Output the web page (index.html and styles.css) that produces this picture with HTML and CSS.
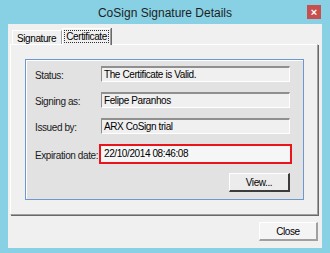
FILE: index.html
```html
<!DOCTYPE html>
<html lang="en">
<head>
    <meta charset="UTF-8">
    <title>CoSign Signature Details</title>
    <link rel="stylesheet" href="styles.css">
</head>
<body>
    <div class="window">
        <!-- title bar -->
        <div class="titlebar">
            <span class="title">CoSign Signature Details</span>
            <span class="close-x">&#215;</span>
        </div>

        <div class="client">
            <!-- tabs -->
            <div class="tabs">
                <div class="tab">Signature</div>
                <div class="tab active"><span class="focus">Certificate</span></div>
            </div>

            <div class="panel">
                <div class="group">
                    <div class="row">
                        <span class="label">Status:</span>
                        <div class="field">The Certificate is Valid.</div>
                    </div>
                    <div class="row">
                        <span class="label">Signing as:</span>
                        <div class="field">Felipe Paranhos</div>
                    </div>
                    <div class="row">
                        <span class="label">Issued by:</span>
                        <div class="field">ARX CoSign trial</div>
                    </div>
                    <div class="row">
                        <span class="label">Expiration date:</span>
                        <div class="field highlight">22/10/2014 08:46:08</div>
                    </div>
                    <div class="actions">
                        <button class="btn view-btn">View...</button>
                    </div>
                </div>
            </div>

            <div class="footer">
                <button class="btn close-btn">Close</button>
            </div>
        </div>
    </div>
</body>
</html>
```

FILE: styles.css
```css
body, html {
    margin: 0;
    padding: 0;
}

.window {
    width: 330px;
    height: 253px;
    background-color: #88d1e4;
    display: flex;
    flex-direction: column;
    font-family: "Liberation Sans", Arial, sans-serif;
    font-size: 10px;
    letter-spacing: -0.4px;
    color: #000;
}

/* title bar */
.titlebar {
    height: 24px;
    display: flex;
    align-items: center;
    justify-content: center;
    position: relative;
}

.title {
    font-size: 12px;
    color: #1e1e1e;
    letter-spacing: 0;
    margin-top: 2px;
}

.close-x {
    position: absolute;
    top: 5px;
    right: 9px;
    width: 14px;
    height: 14px;
    background-color: #c7504f;
    color: #fff;
    font-size: 11px;
    font-weight: bold;
    letter-spacing: 0;
    line-height: 14px;
    text-align: center;
}

/* client area */
.client {
    flex: 1;
    margin: 0 8px 5px 8px;
    background-color: #f0f0f0;
    display: flex;
    flex-direction: column;
    padding-top: 5px;
}

.tabs {
    display: flex;
    align-items: flex-end;
    margin-left: 4px;
    height: 15px;
    position: relative;
    z-index: 1;
}

.tab {
    height: 13px;
    padding: 0 5px 0 4px;
    border-top: 1px solid #fff;
    border-left: 1px solid #fff;
    border-right: 1px solid #a0a0a0;
    line-height: 15px;
    background-color: #f0f0f0;
}

.tab.active {
    height: 16px;
    margin-bottom: -1px;
    padding: 0 1px;
    box-shadow: 1px 0 0 #696969;
    line-height: 15px;
}

.focus {
    border: 1px dotted #333;
    padding: 0 1px;
}

.panel {
    height: 171px;
    margin: 0 4px 0 2px;
    box-sizing: border-box;
    border-top: 1px solid #fff;
    border-left: 1px solid #fff;
    border-right: 1px solid #a0a0a0;
    border-bottom: 1px solid #a0a0a0;
    box-shadow: 1px 1px 0 #696969;
    padding: 14px 13px 14px 14px;
}

.group {
    height: 100%;
    box-sizing: border-box;
    background-color: #e2e2e2;
    border: 1px solid #6c98d0;
    box-shadow: inset 1px 1px 0 #fff;
    padding: 6px 13px 0 9px;
    display: flex;
    flex-direction: column;
    gap: 10px;
}

.row {
    display: flex;
    align-items: center;
    height: 16px;
}

.row:nth-child(4) {
    margin-top: 2px;
}

.label {
    width: 66px;
    flex-shrink: 0;
    white-space: nowrap;
    color: #1a1a1a;
    padding-top: 3px;
}

.field {
    flex: 1;
    height: 16px;
    box-sizing: border-box;
    background-color: #f0f0f0;
    border-top: 2px solid #8f8f8f;
    border-left: 1px solid #8f8f8f;
    border-right: 1px solid #fff;
    border-bottom: 1px solid #fff;
    padding-left: 2px;
    line-height: 13px;
    white-space: nowrap;
    overflow: hidden;
}

.field.highlight {
    outline: 2px solid #e8161a;
    outline-offset: 0;
    border: 1px solid #f4f4f4;
    background-color: #f6f6f6;
    line-height: 14px;
}

.actions {
    display: flex;
    justify-content: flex-end;
    margin-top: 1px;
}

.btn {
    font-family: "Liberation Sans", Arial, sans-serif;
    font-size: 10px;
    letter-spacing: -0.4px;
    color: #000;
    background-color: #ececec;
    border-top: 1px solid #fff;
    border-left: 1px solid #fff;
    border-right: 2px solid #3c3c3c;
    border-bottom: 2px solid #3c3c3c;
    padding: 0;
    margin: 0;
    box-sizing: border-box;
}

.view-btn {
    width: 61px;
    height: 19px;
}

.footer {
    display: flex;
    justify-content: flex-end;
    padding: 7px 4px 0 0;
}

.close-btn {
    width: 59px;
    height: 19px;
    background-color: #f4f4f4;
    border-right: 2px solid #a0a0a0;
    border-bottom: 2px solid #a0a0a0;
}
```
